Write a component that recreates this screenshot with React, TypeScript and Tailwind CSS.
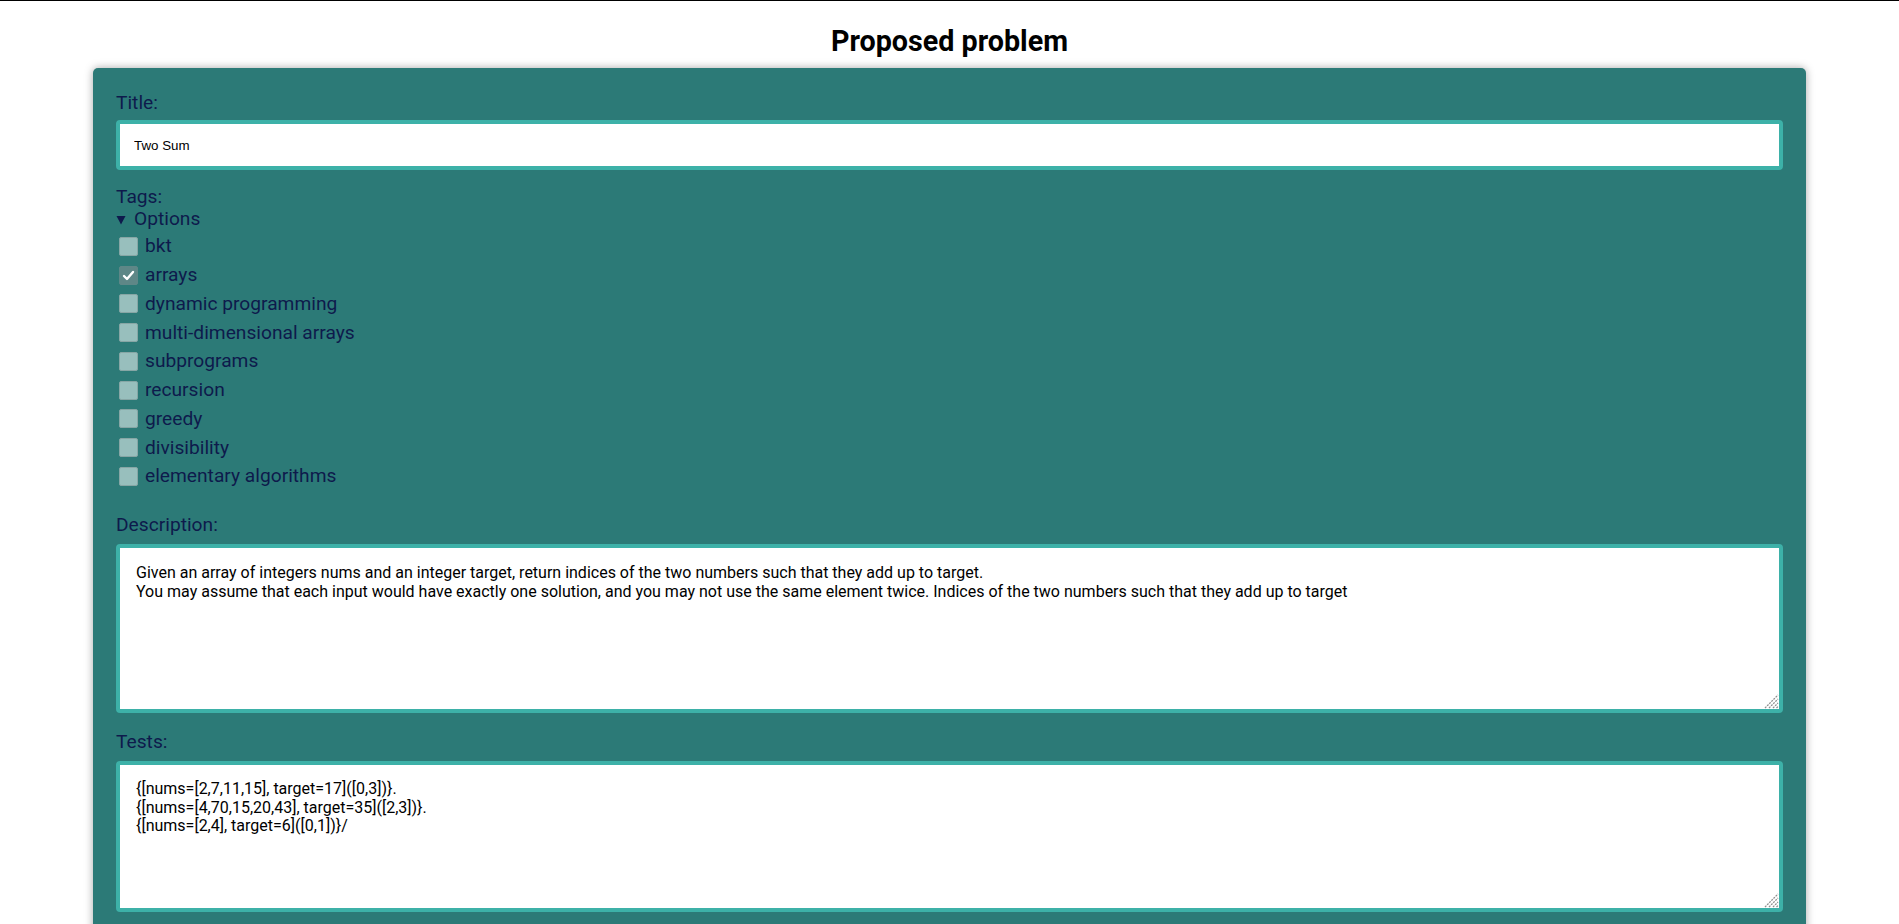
import React from 'react';

const tags = [
  { name: 'bkt', checked: false },
  { name: 'arrays', checked: true },
  { name: 'dynamic programming', checked: false },
  { name: 'multi-dimensional arrays', checked: false },
  { name: 'subprograms', checked: false },
  { name: 'recursion', checked: false },
  { name: 'greedy', checked: false },
  { name: 'divisibility', checked: false },
  { name: 'elementary algorithms', checked: false },
];

const description =
  'Given an array of integers nums and an integer target, return indices of the two numbers such that they add up to target.\nYou may assume that each input would have exactly one solution, and you may not use the same element twice. Indices of the two numbers such that they add up to target';

const tests =
  '{[nums=[2,7,11,15], target=17]([0,3])}.\n{[nums=[4,70,15,20,43], target=35]([2,3])}.\n{[nums=[2,4], target=6]([0,1])}/';

function Checkbox({ checked }: { checked: boolean }) {
  return (
    <span
      className={
        checked
          ? 'flex items-center justify-center w-[19px] h-[19px] ml-[3px] rounded-[2px] bg-[#5e8787] border border-[#5e8787]'
          : 'flex items-center justify-center w-[19px] h-[19px] ml-[3px] rounded-[2px] bg-[#98bfbd] border border-[#86a6a5]'
      }
    >
      {checked && (
        <svg width="13" height="13" viewBox="0 0 13 13">
          <polyline points="2,7 5,10 11,3" fill="none" stroke="#ffffff" strokeWidth="2.4" strokeLinecap="round" strokeLinejoin="round" />
        </svg>
      )}
    </span>
  );
}

// hatched corner like the browser's textarea grip
function Grip() {
  return (
    <svg className="absolute right-[4px] bottom-[4px] pointer-events-none" width="15" height="15" viewBox="0 0 15 15">
      <g stroke="#8f8f8f" strokeWidth="1.3" strokeDasharray="2 1">
        <line x1="1" y1="14" x2="14" y2="1" />
        <line x1="5" y1="14" x2="14" y2="5" />
        <line x1="9" y1="14" x2="14" y2="9" />
        <line x1="12.5" y1="14" x2="14" y2="12.5" />
      </g>
    </svg>
  );
}

function Field({ value, height, pt }: { value: string; height: string; pt: string }) {
  return (
    <div className="relative mt-[8px]">
      <textarea
        readOnly
        defaultValue={value}
        className={`block w-full ${height} ${pt} resize-none rounded-[4px] border-4 border-[#3db1a8] bg-white px-[16px] text-[16px] leading-[18.75px] text-black outline-none`}
      />
      <Grip />
    </div>
  );
}

export default function App() {
  return (
    <div className="min-h-screen bg-white border-t border-black font-['Roboto',sans-serif] pb-10">
      <h1 className="pt-[23px] text-center text-[28.7px] leading-[34px] font-bold text-black">
        Proposed problem
      </h1>

      <div className="mx-auto mt-[10px] w-[1713px] rounded-[5px] bg-[#2c7a77] px-[23px] pt-[24px] pb-10 shadow-[0_0_8px_rgba(0,0,0,0.35)] text-[#0e1a4c]">
        {/* Title */}
        <label className="block text-[19.2px] leading-[22px]">Title:</label>
        <input
          readOnly
          value="Two Sum"
          className="mt-[6px] block w-full h-[50px] rounded-[4px] border-4 border-[#3db1a8] bg-white px-[14px] text-[13.33px] text-black font-['Liberation_Sans',Arial,sans-serif] outline-none"
        />

        {/* Tags */}
        <div className="mt-[16px] text-[19.2px] leading-[22px]">Tags:</div>
        <details open className="text-[19.2px] leading-[22px]">
          <summary className="flex items-center gap-[8px] list-none cursor-pointer [&::-webkit-details-marker]:hidden">
            <svg width="10" height="10" viewBox="0 0 10 10" className="mt-[2px]">
              <polygon points="0.5,1 9.5,1 5,9.5" fill="#0e1a4c" />
            </svg>
            <span>Options</span>
          </summary>
          <div className="pt-[2px]">
            {tags.map((t) => (
              <div key={t.name} className="flex items-center gap-[7px] h-[28.75px]">
                <Checkbox checked={t.checked} />
                <span>{t.name}</span>
              </div>
            ))}
          </div>
        </details>

        {/* Description */}
        <label className="mt-[23px] block text-[19.2px] leading-[22px]">Description:</label>
        <Field value={description} height="h-[169px]" pt="pt-[16px]" />

        {/* Tests */}
        <label className="mt-[18px] block text-[19.2px] leading-[22px]">Tests:</label>
        <Field value={tests} height="h-[151px]" pt="pt-[15px]" />
      </div>
    </div>
  );
}
